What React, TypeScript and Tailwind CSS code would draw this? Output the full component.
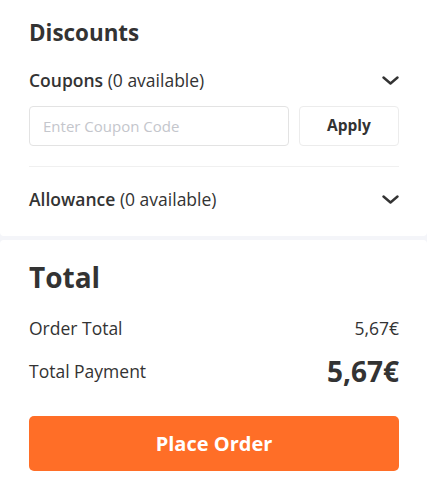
import React from "react";

// Checkout sidebar: discounts (coupon / allowance) and order total.

const FONT = { fontFamily: '"Open Sans", "Noto Sans", Arial, sans-serif' };

function Chevron() {
  return (
    <svg width="17" height="9" viewBox="0 0 17 9" fill="none" className="shrink-0">
      <path
        d="M1.5 1.5 L8.5 7.5 L15.5 1.5"
        stroke="#333333"
        strokeWidth="2.4"
        strokeLinecap="round"
        strokeLinejoin="round"
      />
    </svg>
  );
}

function DiscountRow({ name, count }: { name: string; count: number }) {
  return (
    <div className="flex items-center justify-between">
      <div className="text-[17.5px] leading-[24px] text-[#333]">
        <span className="font-semibold">{name}</span>{" "}
        <span>({count} available)</span>
      </div>
      <Chevron />
    </div>
  );
}

export default function App() {
  return (
    <div className="flex min-h-[499px] flex-col bg-[#f4f5f9] text-[#333]" style={FONT}>
      {/* Discounts */}
      <section className="bg-white rounded-b-[4px] pt-[18px] pb-[25px] pl-[29px] pr-[28px]">
        <h2 className="text-[22.4px] leading-[30px] font-bold">Discounts</h2>

        <div className="mt-[20px]">
          <DiscountRow name="Coupons" count={0} />
        </div>

        <div className="mt-[14px] flex gap-[10px]">
          <input
            type="text"
            placeholder="Enter Coupon Code"
            className="h-[40px] flex-1 min-w-0 rounded-[4px] border border-[#e3e3e3] px-[13px] text-[15px] text-[#333] placeholder:text-[#c4c6cc] outline-none"
          />
          <button className="h-[40px] w-[100px] rounded-[4px] border border-[#ececec] bg-white text-[15.5px] font-bold text-[#333]">
            Apply
          </button>
        </div>

        <div className="mt-[20px] border-t border-[#f0f0f0]" />

        <div className="mt-[20px]">
          <DiscountRow name="Allowance" count={0} />
        </div>
      </section>

      {/* Total */}
      <section className="mt-[4px] flex-1 bg-white rounded-t-[4px] pt-[19px] pb-[28px] pl-[29px] pr-[28px]">
        <h2 className="text-[28px] leading-[36px] font-bold">Total</h2>

        <div className="mt-[21px] flex items-center justify-between text-[17.5px] leading-[24px]">
          <span>Order Total</span>
          <span>5,67€</span>
        </div>

        <div className="mt-[13px] flex items-center justify-between">
          <span className="text-[17.5px] leading-[24px]">Total Payment</span>
          <span className="text-[28px] leading-[36px] font-bold">5,67€</span>
        </div>

        <button className="mt-[27px] h-[55px] w-full rounded-[5px] bg-[#ff6e27] text-[20px] font-bold text-white">
          Place Order
        </button>
      </section>
    </div>
  );
}
